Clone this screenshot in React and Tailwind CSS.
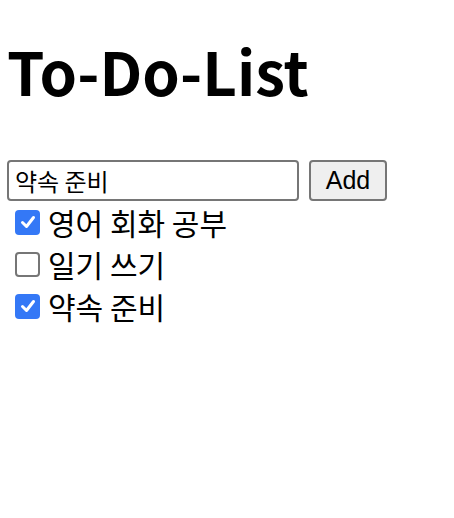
import { useState } from 'react';

const font = { fontFamily: '"Noto Sans CJK KR", "Noto Sans", sans-serif' };

function Check({ checked, onClick }) {
    return checked ? (
        <span onClick={onClick} className="w-[25px] h-[25px] rounded-[4px] bg-[#3478f6] flex items-center justify-center shrink-0">
            <svg width="18" height="18" viewBox="0 0 18 18">
                <path d="M3.5 9.5 L7.5 13.5 L14.5 4.5" fill="none" stroke="white" strokeWidth="3" strokeLinecap="round" strokeLinejoin="round" />
            </svg>
        </span>
    ) : (
        <span onClick={onClick} className="w-[25px] h-[25px] rounded-[4px] border-2 border-[#767676] bg-white shrink-0" />
    );
}

export default function App() {
    const [todos, setTodos] = useState([
        { id: 1, text: '영어 회화 공부', done: true },
        { id: 2, text: '일기 쓰기', done: false },
        { id: 3, text: '약속 준비', done: true },
    ]);
    const [value, setValue] = useState('약속 준비');

    const toggle = (id) => setTodos(todos.map((t) => (t.id === id ? { ...t, done: !t.done } : t)));

    return (
        <div className="bg-white min-h-screen px-[7px] text-black" style={font}>
            <h1 className="text-[60px] font-bold leading-none pt-[40px] pb-[60px]">To-Do-List</h1>
            <div className="flex items-center gap-[10px]">
                <input
                    value={value}
                    onChange={(e) => setValue(e.target.value)}
                    className="w-[292px] h-[41px] border-2 border-[#767676] rounded-[4px] px-[6px] text-[24px] outline-none"
                    style={font}
                />
                <button
                    className="w-[78px] h-[41px] border-2 border-[#767676] rounded-[4px] bg-[#efefef] text-[25px]"
                    style={{ fontFamily: '"Liberation Sans", Arial, sans-serif' }}
                >
                    Add
                </button>
            </div>
            <ul className="flex flex-col">
                {todos.map((t) => (
                    <li key={t.id} className="flex items-center h-[42px] gap-[8px] pl-[8px] text-[30px]">
                        <Check checked={t.done} onClick={() => toggle(t.id)} />
                        <span>{t.text}</span>
                    </li>
                ))}
            </ul>
        </div>
    );
}
